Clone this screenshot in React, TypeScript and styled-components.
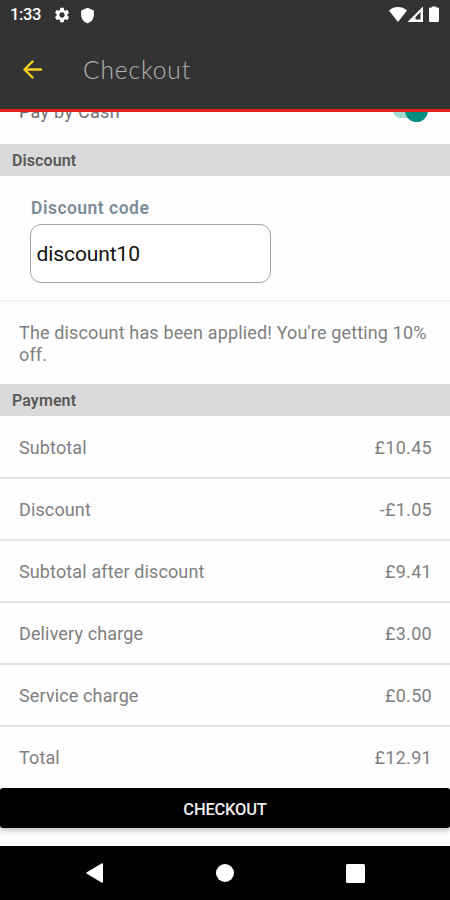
import React from 'react';
import styled, { createGlobalStyle } from 'styled-components';
import { MdSettings, MdShield } from 'react-icons/md';

const GlobalStyle = createGlobalStyle`
  * { box-sizing: border-box; }
  body { margin: 0; background: #fff; font-family: Roboto, sans-serif; }
`;

const Screen = styled.div`
  display: flex;
  flex-direction: column;
  width: 450px;
  height: 900px;
  overflow: hidden;
  background: #fefefe;
`;

const Header = styled.header`
  flex: none;
  height: 112px;
  background: #333;
  border-bottom: 3px solid #e61e1e;
`;

const StatusBar = styled.div`
  display: flex;
  align-items: center;
  height: 30px;
  padding: 0 7px 0 10px;
  color: #fff;
`;

const Clock = styled.span`
  width: 43px;
  font-size: 16.5px;
  font-weight: 500;
  letter-spacing: -0.4px;
  line-height: 30px;
`;

const StatusIcons = styled.div`
  display: flex;
  align-items: center;
  gap: 8px;
  flex: 1;
`;

const Toolbar = styled.div`
  display: flex;
  align-items: center;
  height: 79px;
  padding-left: 22px;
`;

const Title = styled.h1`
  margin: 0 0 0 40px;
  font-family: Lato, sans-serif;
  font-size: 24.5px;
  font-weight: 300;
  letter-spacing: 0.9px;
  line-height: 30px;
  color: #b5b5b5;
`;

const Content = styled.main`
  flex: none;
  height: 676px;
  overflow: hidden;
`;

const CashRow = styled.div`
  display: flex;
  justify-content: space-between;
  align-items: center;
  height: 62px;
  margin-top: -30px;
  padding: 0 20px 5px 19px;
  font-size: 18px;
  letter-spacing: 0.3px;
  color: #737373;
`;

const CashLabel = styled.span`
  padding-top: 2px;
`;

const SwitchTrack = styled.div`
  display: flex;
  justify-content: flex-end;
  align-items: center;
  width: 35px;
  height: 15px;
  margin-right: 2px;
  border-radius: 8px;
  background: #a4d8d3;
`;

const SwitchThumb = styled.div`
  flex: none;
  width: 23px;
  height: 23px;
  border-radius: 50%;
  background: #068e80;
`;

const SectionTitle = styled.h2`
  height: 32px;
  margin: 0;
  padding-left: 12px;
  background: #dadada;
  font-size: 16px;
  font-weight: 600;
  letter-spacing: 0.1px;
  line-height: 34px;
  color: #585858;
`;

const CodeForm = styled.div`
  height: 126px;
  padding: 20px 30px 0;
  border-bottom: 2px solid #f2f2f2;
`;

const CodeLabel = styled.label`
  display: block;
  height: 28px;
  padding-left: 1px;
  font-size: 17.5px;
  font-weight: 600;
  letter-spacing: 0.48px;
  line-height: 24px;
  color: #7c8b98;
`;

const CodeInput = styled.input`
  display: block;
  width: 241px;
  height: 59px;
  padding: 0 5.5px;
  border: 1px solid #a0a5a7;
  border-radius: 11px;
  outline: 0;
  background: #fff;
  font: 400 21px Roboto, sans-serif;
  letter-spacing: -0.1px;
  color: #111;
`;

const Message = styled.p`
  height: 82px;
  margin: 0;
  padding: 20px 19px 0;
  font-size: 18px;
  letter-spacing: 0.15px;
  line-height: 22px;
  color: #808080;
`;

const Charges = styled.div`
  padding-top: 1px;
`;

const ChargeRow = styled.div`
  display: flex;
  justify-content: space-between;
  align-items: center;
  height: 62px;
  padding: 1px 18px 0 19px;
  border-bottom: 2px solid #e2e2e2;
  font-size: 18px;
  color: #808080;

  &:last-child {
    height: 61px;
    padding-bottom: 2px;
    border-bottom: 0;
  }
`;

const ChargeLabel = styled.span`
  letter-spacing: 0.13px;
`;

const ChargeAmount = styled.span`
  letter-spacing: 0.3px;
`;

const CheckoutButton = styled.button`
  flex: none;
  height: 40px;
  padding: 2px 0 0;
  border: 0;
  border-radius: 3px;
  background: #000;
  box-shadow: 0 3px 5px rgba(0, 0, 0, 0.22);
  font: 500 16.5px Roboto, sans-serif;
  letter-spacing: -0.2px;
  color: #eee;
`;

const NavBar = styled.nav`
  display: grid;
  grid-template-columns: repeat(3, 130px);
  justify-content: center;
  justify-items: center;
  align-items: center;
  height: 54px;
  margin-top: 18px;
  background: #000;
`;

const charges = [
  { label: 'Subtotal', amount: '£10.45' },
  { label: 'Discount', amount: '-£1.05' },
  { label: 'Subtotal after discount', amount: '£9.41' },
  { label: 'Delivery charge', amount: '£3.00' },
  { label: 'Service charge', amount: '£0.50' },
  { label: 'Total', amount: '£12.91' },
];

function SignalIcons() {
  return (
    <svg width="54" height="20" viewBox="0 0 54 20" fill="#fff">
      <path d="M0 5.500C5 .9 13 .9 18 5.500L9 17Z" />
      <path d="M34 1.500V17H18.500Z" />
      <path d="M31.500 7V14.500H26.500V12Z" fill="#333" />
      <path d="M43 2.500V1.500h4v1h1.800c.7 0 1.200.5 1.200 1.200v12.100c0 .7-.5 1.200-1.200 1.200h-7.600c-.7 0-1.200-.5-1.200-1.200V3.700c0-.7.5-1.200 1.200-1.200Z" />
    </svg>
  );
}

function BackArrow() {
  return (
    <svg width="21" height="20" viewBox="0 0 21 20" fill="none" stroke="#f7cf22" strokeWidth="2.4" strokeLinecap="round" strokeLinejoin="round">
      <path d="M19 9.500H2.500M10.500 1.500L2.500 9.500l8 8" />
    </svg>
  );
}

export default function App() {
  return (
    <Screen>
      <GlobalStyle />
      <Header>
        <StatusBar>
          <Clock>1:33</Clock>
          <StatusIcons>
            <MdSettings size={18} />
            <MdShield size={17} />
          </StatusIcons>
          <SignalIcons />
        </StatusBar>
        <Toolbar>
          <BackArrow />
          <Title>Checkout</Title>
        </Toolbar>
      </Header>
      <Content>
        <CashRow>
          <CashLabel>Pay by Cash</CashLabel>
          <SwitchTrack>
            <SwitchThumb />
          </SwitchTrack>
        </CashRow>
        <SectionTitle>Discount</SectionTitle>
        <CodeForm>
          <CodeLabel htmlFor="code">Discount code</CodeLabel>
          <CodeInput id="code" defaultValue="discount10" spellCheck={false} />
        </CodeForm>
        <Message>The discount has been applied! You're getting 10% off.</Message>
        <SectionTitle>Payment</SectionTitle>
        <Charges>
          {charges.map((c) => (
            <ChargeRow key={c.label}>
              <ChargeLabel>{c.label}</ChargeLabel>
              <ChargeAmount>{c.amount}</ChargeAmount>
            </ChargeRow>
          ))}
        </Charges>
      </Content>
      <CheckoutButton>CHECKOUT</CheckoutButton>
      <NavBar>
        <svg width="18" height="20" viewBox="0 0 18 20" fill="#fff">
          <path d="M.8 9.200L15.500.5c.8-.5 1.500 0 1.500.8v17.400c0 .8-.7 1.300-1.500.8L.8 10.800c-.6-.4-.6-1.200 0-1.600Z" />
        </svg>
        <svg width="18" height="18" viewBox="0 0 18 18" fill="#fff">
          <circle cx="9" cy="9" r="9" />
        </svg>
        <svg width="19" height="19" viewBox="0 0 19 19" fill="#fff">
          <rect width="19" height="19" rx="1.500" />
        </svg>
      </NavBar>
    </Screen>
  );
}
